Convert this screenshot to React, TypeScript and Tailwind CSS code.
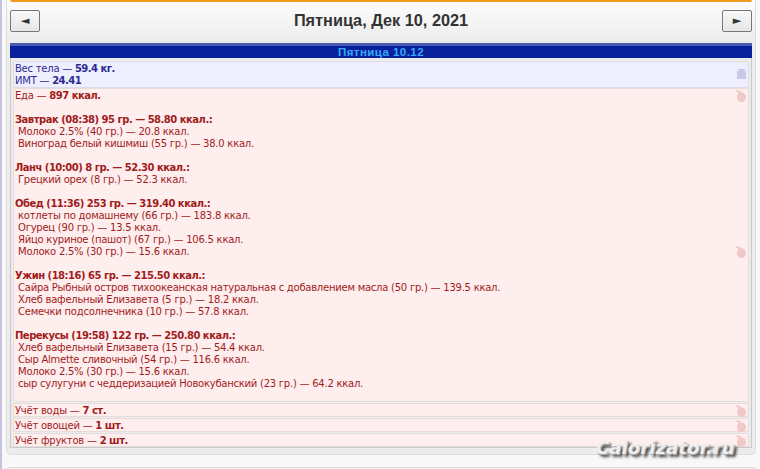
import React from 'react';

type Meal = { title: string; items: string[] };

const meals: Meal[] = [
  {
    title: 'Завтрак (08:38) 95 гр. — 58.80 ккал.:',
    items: ['Молоко 2.5% (40 гр.) — 20.8 ккал.', 'Виноград белый кишмиш (55 гр.) — 38.0 ккал.'],
  },
  { title: 'Ланч (10:00) 8 гр. — 52.30 ккал.:', items: ['Грецкий орех (8 гр.) — 52.3 ккал.'] },
  {
    title: 'Обед (11:36) 253 гр. — 319.40 ккал.:',
    items: [
      'котлеты по домашнему (66 гр.) — 183.8 ккал.',
      'Огурец (90 гр.) — 13.5 ккал.',
      'Яйцо куриное (пашот) (67 гр.) — 106.5 ккал.',
      'Молоко 2.5% (30 гр.) — 15.6 ккал.',
    ],
  },
  {
    title: 'Ужин (18:16) 65 гр. — 215.50 ккал.:',
    items: [
      'Сайра Рыбный остров тихоокеанская натуральная с добавлением масла (50 гр.) — 139.5 ккал.',
      'Хлеб вафельный Елизавета (5 гр.) — 18.2 ккал.',
      'Семечки подсолнечника (10 гр.) — 57.8 ккал.',
    ],
  },
  {
    title: 'Перекусы (19:58) 122 гр. — 250.80 ккал.:',
    items: [
      'Хлеб вафельный Елизавета (15 гр.) — 54.4 ккал.',
      'Сыр Almette сливочный (54 гр.) — 116.6 ккал.',
      'Молоко 2.5% (30 гр.) — 15.6 ккал.',
      'сыр сулугуни с чеддеризацией Новокубанский (23 гр.) — 64.2 ккал.',
    ],
  },
];

const Apple = () => (
  <svg width="10" height="12" viewBox="0 0 10 12" className="block">
    <path d="M0 0.5 H3.5 L5.5 2.5 C8 2.5 10 4.5 10 7 C10 10 8 12 5.5 12 C3 12 1 10 1 7 C1 5 2 3.5 3 3 L0 1.5 Z" fill="#efc8c8" />
  </svg>
);

const Weight = () => (
  <svg width="9" height="10" viewBox="0 0 9 10" className="block">
    <path d="M0.5 0 H8.5 V1 H6.5 L7 2 H9 V10 H0 V2 H2 L2.5 1 H0.5 Z" fill="#c8c8ea" />
  </svg>
);

const Bold = ({ children }: { children: React.ReactNode }) => (
  <b className="tracking-[-0.5px]">{children}</b>
);

const Tally = ({ label, value }: { label: string; value: string }) => (
  <div className="relative h-[14px] bg-[#ffeeee] border border-[#e6dcdc] rounded-[2px] pl-[1px] pt-[1px] leading-[12px]">
    {label} — <Bold>{value}</Bold>
    <div className="absolute right-[2px] top-[1px]">
      <Apple />
    </div>
  </div>
);

const NavButton = ({ children }: { children: React.ReactNode }) => (
  <button className="w-[30px] h-[22px] flex items-center justify-center bg-gradient-to-b from-[#f8f8f8] to-[#e6e6e6] border border-[#777] rounded-[2px] text-[#333] text-[11px]">
    {children}
  </button>
);

export default function App() {
  return (
    <div className="h-[469px] w-[760px] overflow-hidden relative bg-[#f8f8f8] font-['DejaVu_Sans',sans-serif] text-[10px] tracking-[-0.24px]">
      <div className="flex">
        <div className="w-[2px] h-[469px] bg-[#c4c4e0] shrink-0" />
        <div className="ml-[4px] w-[750px]">
          <div className="h-[455px] flex flex-col border-x border-b border-[#dcdcdc] rounded-b-[5px] bg-[linear-gradient(#fdfdfd,#ececec_43px)] px-[3px]">
            <div className="h-[2px] bg-[#f09c1c] rounded-b-[2px]" />
            <div className="h-[41px] flex items-start justify-between pt-[8px]">
              <NavButton>◄</NavButton>
              <div className="font-['Liberation_Sans',sans-serif] font-bold text-[16.3px] leading-[20px] text-[#333] tracking-normal">
                Пятница, Дек 10, 2021
              </div>
              <NavButton>►</NavButton>
            </div>
            <div className="h-[405px] flex flex-col">
              <div className="h-[3px] bg-[#4a5ab0]" />
              <div className="h-[12px] bg-[#08209c] text-center text-[#38a8f8] font-bold font-['Liberation_Sans',sans-serif] text-[11.5px] tracking-[0.45px] leading-[12px]">
                Пятница 10.12
              </div>
              <div className="flex-1 flex flex-col border-x border-b border-[#c8c8c8] px-[2px] pt-[3px]">
                <div className="relative h-[27px] bg-[#eeeeff] border border-[#dcdcea] rounded-[2px] pl-[1px] pt-[1px] text-[#2a2a90] leading-[12px]">
                  <div>
                    Вес тела — <Bold>59.4 кг.</Bold>
                  </div>
                  <div>
                    ИМТ — <Bold>24.41</Bold>
                  </div>
                  <div className="absolute right-[2px] top-[7px]">
                    <Weight />
                  </div>
                </div>
                <div className="relative flex-1 bg-[#ffeeee] border border-[#e6dcdc] rounded-[2px] pl-[1px] pt-[1px] text-[#a01c1c] leading-[12px]">
                  <div>
                    Еда — <Bold>897 ккал.</Bold>
                  </div>
                  {meals.map((m) => (
                    <div key={m.title} className="mt-[12px]">
                      <Bold>{m.title}</Bold>
                      {m.items.map((item) => (
                        <div key={item} className="pl-[3px]">
                          {item}
                        </div>
                      ))}
                    </div>
                  ))}
                  <div className="absolute right-[2px] top-[1px]">
                    <Apple />
                  </div>
                  <div className="absolute right-[2px] top-[157px]">
                    <Apple />
                  </div>
                </div>
                <div className="flex flex-col gap-[1px] pt-[1px] text-[#a01c1c]">
                  <Tally label="Учёт воды" value="7 ст." />
                  <Tally label="Учёт овощей" value="1 шт." />
                  <Tally label="Учёт фруктов" value="2 шт." />
                </div>
              </div>
            </div>
          </div>
          <div className="h-[2px] mt-[12px] ml-[1px] rounded-t-[3px] border-t border-x border-[#dcdcdc] bg-[#f4f4f4]" />
        </div>
      </div>
      <div className="absolute left-[596px] top-[437px] italic font-bold text-[18px] leading-[22px] text-[#eeeeee] tracking-[0.1px] [text-shadow:1px_1px_0_#aaa,3px_3px_3px_#333]">
        Calorizator.ru
      </div>
    </div>
  );
}
